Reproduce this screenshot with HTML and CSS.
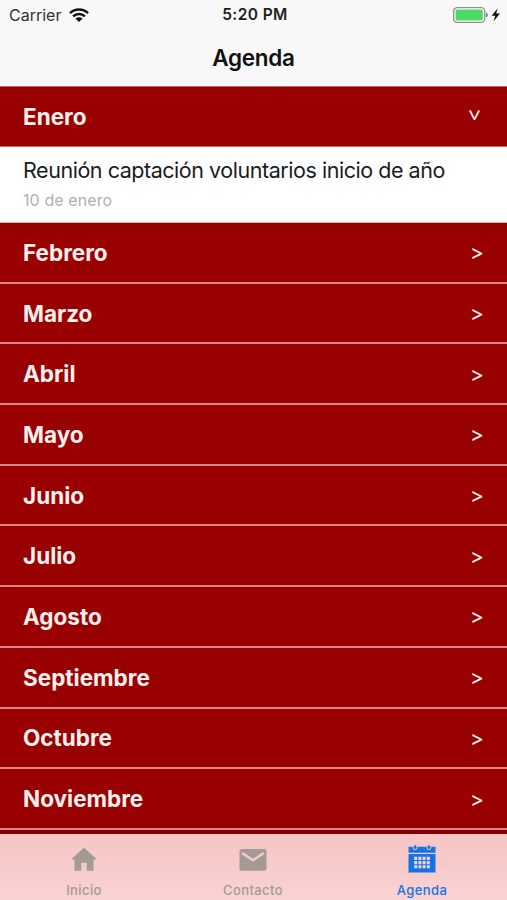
FILE: index.html
```html
<!DOCTYPE html>
<html lang="es">

<head>
    <meta charset="UTF-8">
    <meta name="viewport" content="width=device-width, initial-scale=1.0">
    <title>Agenda</title>
    <link rel="stylesheet" href="styles.css">
</head>

<body>

    <header>
        <div class="status-bar">
            <div class="carrier">
                <span class="carrier-name">Carrier</span>
                <svg class="wifi" width="20" height="14" viewBox="0 0 20 14">
                    <g fill="none" stroke="#111" stroke-width="2.5">
                        <path d="M1 5.1a13 13 0 0 1 18 0" />
                        <path d="M4.1 8.3a8.4 8.4 0 0 1 11.8 0" />
                    </g>
                    <path fill="#111" d="M10 14 6.4 10.6a5.2 5.2 0 0 1 7.2 0z" />
                </svg>
            </div>
            <span class="time">5:20 PM</span>
            <div class="battery">
                <svg width="48" height="16" viewBox="0 0 48 16">
                    <rect x="0.7" y="0.7" width="31" height="14.6" rx="3.6" fill="#fff" stroke="#8f8f8f" stroke-width="1.3" />
                    <rect x="2.6" y="2.6" width="27.2" height="10.8" rx="1.6" fill="#4cd964" />
                    <path d="M33 5.5c2.4.8 2.4 4.2 0 5z" fill="#777" />
                    <path d="M44.6 1.5 38.6 8.8h3.6l-1.6 5.4 6.4-7.6h-3.8z" fill="#111" />
                </svg>
            </div>
        </div>
        <h1>Agenda</h1>
    </header>

    <main>
        <div class="month open"><span class="name">Enero</span><span class="arrow">&gt;</span></div>
        <div class="event">
            <p class="event-title">Reunión captación voluntarios inicio de año</p>
            <p class="event-date">10 de enero</p>
        </div>
        <div class="month"><span class="name">Febrero</span><span class="arrow">&gt;</span></div>
        <div class="month"><span class="name">Marzo</span><span class="arrow">&gt;</span></div>
        <div class="month"><span class="name">Abril</span><span class="arrow">&gt;</span></div>
        <div class="month"><span class="name">Mayo</span><span class="arrow">&gt;</span></div>
        <div class="month"><span class="name">Junio</span><span class="arrow">&gt;</span></div>
        <div class="month"><span class="name">Julio</span><span class="arrow">&gt;</span></div>
        <div class="month"><span class="name">Agosto</span><span class="arrow">&gt;</span></div>
        <div class="month"><span class="name">Septiembre</span><span class="arrow">&gt;</span></div>
        <div class="month"><span class="name">Octubre</span><span class="arrow">&gt;</span></div>
        <div class="month"><span class="name">Noviembre</span><span class="arrow">&gt;</span></div>
    </main>

    <nav>
        <a class="tab">
            <svg width="30" height="30" viewBox="0 0 30 30" fill="currentColor">
                <path d="M15 3.8 28 15.5h-3.5v11.2h-6.7v-8h-5.6v8H5.5V15.5H2z" />
            </svg>
            <span>Inicio</span>
        </a>
        <a class="tab">
            <svg width="30" height="30" viewBox="0 0 30 30">
                <rect x="1.5" y="5" width="27" height="21.7" rx="2.5" fill="currentColor" />
                <path d="M4.2 9 15 16.3 25.8 9" fill="none" stroke="#f8cccc" stroke-width="2.4" />
            </svg>
            <span>Contacto</span>
        </a>
        <a class="tab active">
            <svg width="30" height="30" viewBox="0 0 30 30">
                <path fill="currentColor" d="M1.5 2.8h27v6h-27zM1.5 10h27v18.6h-27z" />
                <g fill="currentColor" stroke="#f6c9cb" stroke-width="1">
                    <rect x="6.2" y="0.8" width="3.8" height="4.8" rx="1.9" />
                    <rect x="20" y="0.8" width="3.8" height="4.8" rx="1.9" />
                </g>
                <path d="M7.2 14.4h15.6M7.2 18.6h15.6M7.2 22.8h15.6" fill="none" stroke="#f3d5dc" stroke-width="3.1" stroke-dasharray="3 1.2" />
            </svg>
            <span>Agenda</span>
        </a>
    </nav>

</body>

</html>
```
FILE: styles.css
```css
/* General Styles */

* {
    box-sizing: border-box;
}

body {
    display: flex;
    flex-direction: column;
    height: 900px;
    margin: 0;
    overflow: hidden;
    background-color: #fff;
    font-family: Inter, "Liberation Sans", sans-serif;
}

/* Header */

header {
    flex: none;
    height: 87px;
    background-color: #f8f8f8;
    border-bottom: 1px solid #b96a6a;
}

.status-bar {
    display: grid;
    grid-template-columns: 1fr auto 1fr;
    align-items: center;
    height: 29px;
    padding: 0 6px 0 9px;
}

.carrier {
    display: flex;
    align-items: center;
    gap: 8px;
    color: #333;
    font-size: 16px;
}

.time {
    color: #222;
    font-size: 15.5px;
    font-weight: 600;
    letter-spacing: 0.4px;
}

.battery {
    display: flex;
    justify-content: flex-end;
}

h1 {
    margin: 0;
    color: #111;
    font-size: 22.5px;
    font-weight: 600;
    letter-spacing: -0.3px;
    line-height: 57px;
    text-align: center;
}

/* Month list */

main {
    flex: 1;
    min-height: 0;
    overflow: hidden;
    background-color: #850005;
}

.month {
    display: flex;
    justify-content: space-between;
    align-items: center;
    height: 60.7px;
    padding: 0 23px;
    background-color: #990000;
    border-bottom: 2px solid #dc8585;
    color: #fff0ee;
}

.month.open {
    height: 60px;
    border-bottom: 1px solid #c96b6b;
}

.name {
    font-size: 22.5px;
    font-weight: 700;
}

.arrow {
    padding-top: 1px;
    font-size: 21px;
}

.open .arrow {
    padding: 0 3px 0 0;
    transform: rotate(90deg);
}

.event {
    height: 76px;
    padding: 8px 23px 0;
    background-color: #fff;
    border-bottom: 1px solid #e2b0b0;
}

.event p {
    margin: 0;
}

.event-title {
    color: #1c1c1c;
    font-size: 21.5px;
    letter-spacing: -0.46px;
    line-height: 30px;
}

.event-date {
    color: #b0b0b0;
    font-size: 16px;
    letter-spacing: 0.1px;
    line-height: 30px;
}

/* Tab bar */

nav {
    display: flex;
    flex: none;
    height: 66px;
    background: linear-gradient(#f6c5c5, #f8cccc 60%, #f9d3d3);
}

.tab {
    display: flex;
    flex: 1;
    flex-direction: column;
    align-items: center;
    padding: 10px 1px 0 0;
    color: #a39a96;
    font-size: 13px;
    font-weight: 500;
    letter-spacing: 0.4px;
}

.tab span {
    margin-top: 8px;
    line-height: 17px;
}

.tab.active {
    color: #1673e6;
}
```
